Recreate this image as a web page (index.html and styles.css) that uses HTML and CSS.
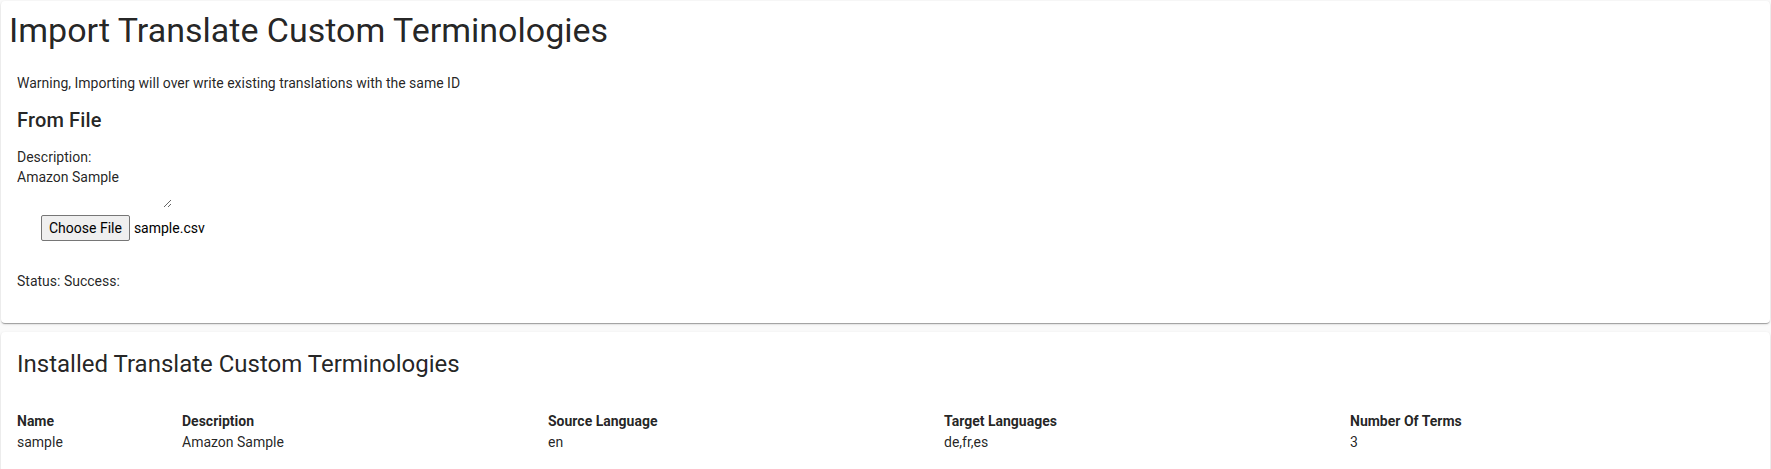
FILE: index.html
```html
<!DOCTYPE html>
<html lang="en">
<head>
<meta charset="utf-8">
<title>Import Translate Custom Terminologies</title>
<link rel="stylesheet" href="styles.css">
</head>
<body>
  <div class="card card-import">
    <h1 class="page-title">Import Translate Custom Terminologies</h1>
    <div class="import-body">
      <p class="warning">Warning, Importing will over write existing translations with the same ID</p>
      <h2 class="section-title">From File</h2>
      <label class="field-label" for="desc">Description:</label>
      <textarea id="desc" class="desc-input">Amazon Sample</textarea>
      <div class="file-row">
        <button type="button" class="file-button">Choose File</button>
        <span class="file-name">sample.csv</span>
      </div>
      <p class="status">Status: Success:</p>
    </div>
  </div>

  <div class="card card-installed">
    <h3 class="list-title">Installed Translate Custom Terminologies</h3>
    <div class="term-table">
      <div class="th">Name</div>
      <div class="th">Description</div>
      <div class="th">Source Language</div>
      <div class="th">Target Languages</div>
      <div class="th">Number Of Terms</div>
      <div class="td">sample</div>
      <div class="td">Amazon Sample</div>
      <div class="td">en</div>
      <div class="td">de,fr,es</div>
      <div class="td">3</div>
    </div>
  </div>
</body>
</html>
```

FILE: styles.css
```css
html, body {
  margin: 0;
  padding: 0;
}

body {
  background: #fafafa;
  padding: 1px 1px 0 1px;
  font-family: Roboto, "Liberation Sans", Arial, sans-serif;
  color: rgba(0, 0, 0, 0.87);
  font-size: 14px;
  line-height: 20px;
}

.card {
  background: #ffffff;
  border-radius: 4px;
  box-shadow: 0px 2px 1px -1px rgba(0, 0, 0, 0.2),
              0px 1px 1px 0px rgba(0, 0, 0, 0.14),
              0px 1px 3px 0px rgba(0, 0, 0, 0.12);
}

.card-import {
  height: 322px;
  box-sizing: border-box;
  padding: 8px;
}

.page-title {
  margin: 0;
  font-size: 34px;
  line-height: 42px;
  font-weight: 400;
  letter-spacing: 0;
}

.import-body {
  padding: 0 8px;
  display: flex;
  flex-direction: column;
  align-items: flex-start;
}

.warning {
  margin: 22px 0 0 0;
}

.section-title {
  margin: 11px 0 0 0;
  font-size: 20px;
  line-height: 32px;
  font-weight: 500;
  letter-spacing: 0.0075em;
}

.field-label {
  margin-top: 11px;
  display: block;
}

.desc-input {
  display: block;
  margin: 0;
  width: 155px;
  height: 41px;
  box-sizing: border-box;
  padding: 0;
  border: none;
  outline: none;
  background: transparent;
  font-family: Roboto, "Liberation Sans", Arial, sans-serif;
  font-size: 14px;
  line-height: 20px;
  color: rgba(0, 0, 0, 0.87);
}

.file-row {
  margin: 7px 0 0 24px;
  display: flex;
  align-items: center;
  gap: 4px;
}

.file-button {
  height: 26px;
  box-sizing: border-box;
  padding: 0 7px;
  border: 1px solid #767676;
  border-radius: 2px;
  background: #efefef;
  font-family: Roboto, "Liberation Sans", Arial, sans-serif;
  font-size: 14px;
  color: #000;
}

.file-name {
  font-size: 14px;
  color: #000;
}

.status {
  margin: 30px 0 0 0;
}

.card-installed {
  margin-top: 9px;
  padding: 16px 16px 32px 16px;
}

.list-title {
  margin: 0;
  font-size: 24px;
  line-height: 32px;
  font-weight: 400;
}

.term-table {
  margin-top: 30px;
  display: grid;
  grid-template-columns: 165px 366px 396px 406px 1fr;
  grid-auto-rows: 21px;
  align-items: center;
}

.th {
  font-weight: 700;
}
```
